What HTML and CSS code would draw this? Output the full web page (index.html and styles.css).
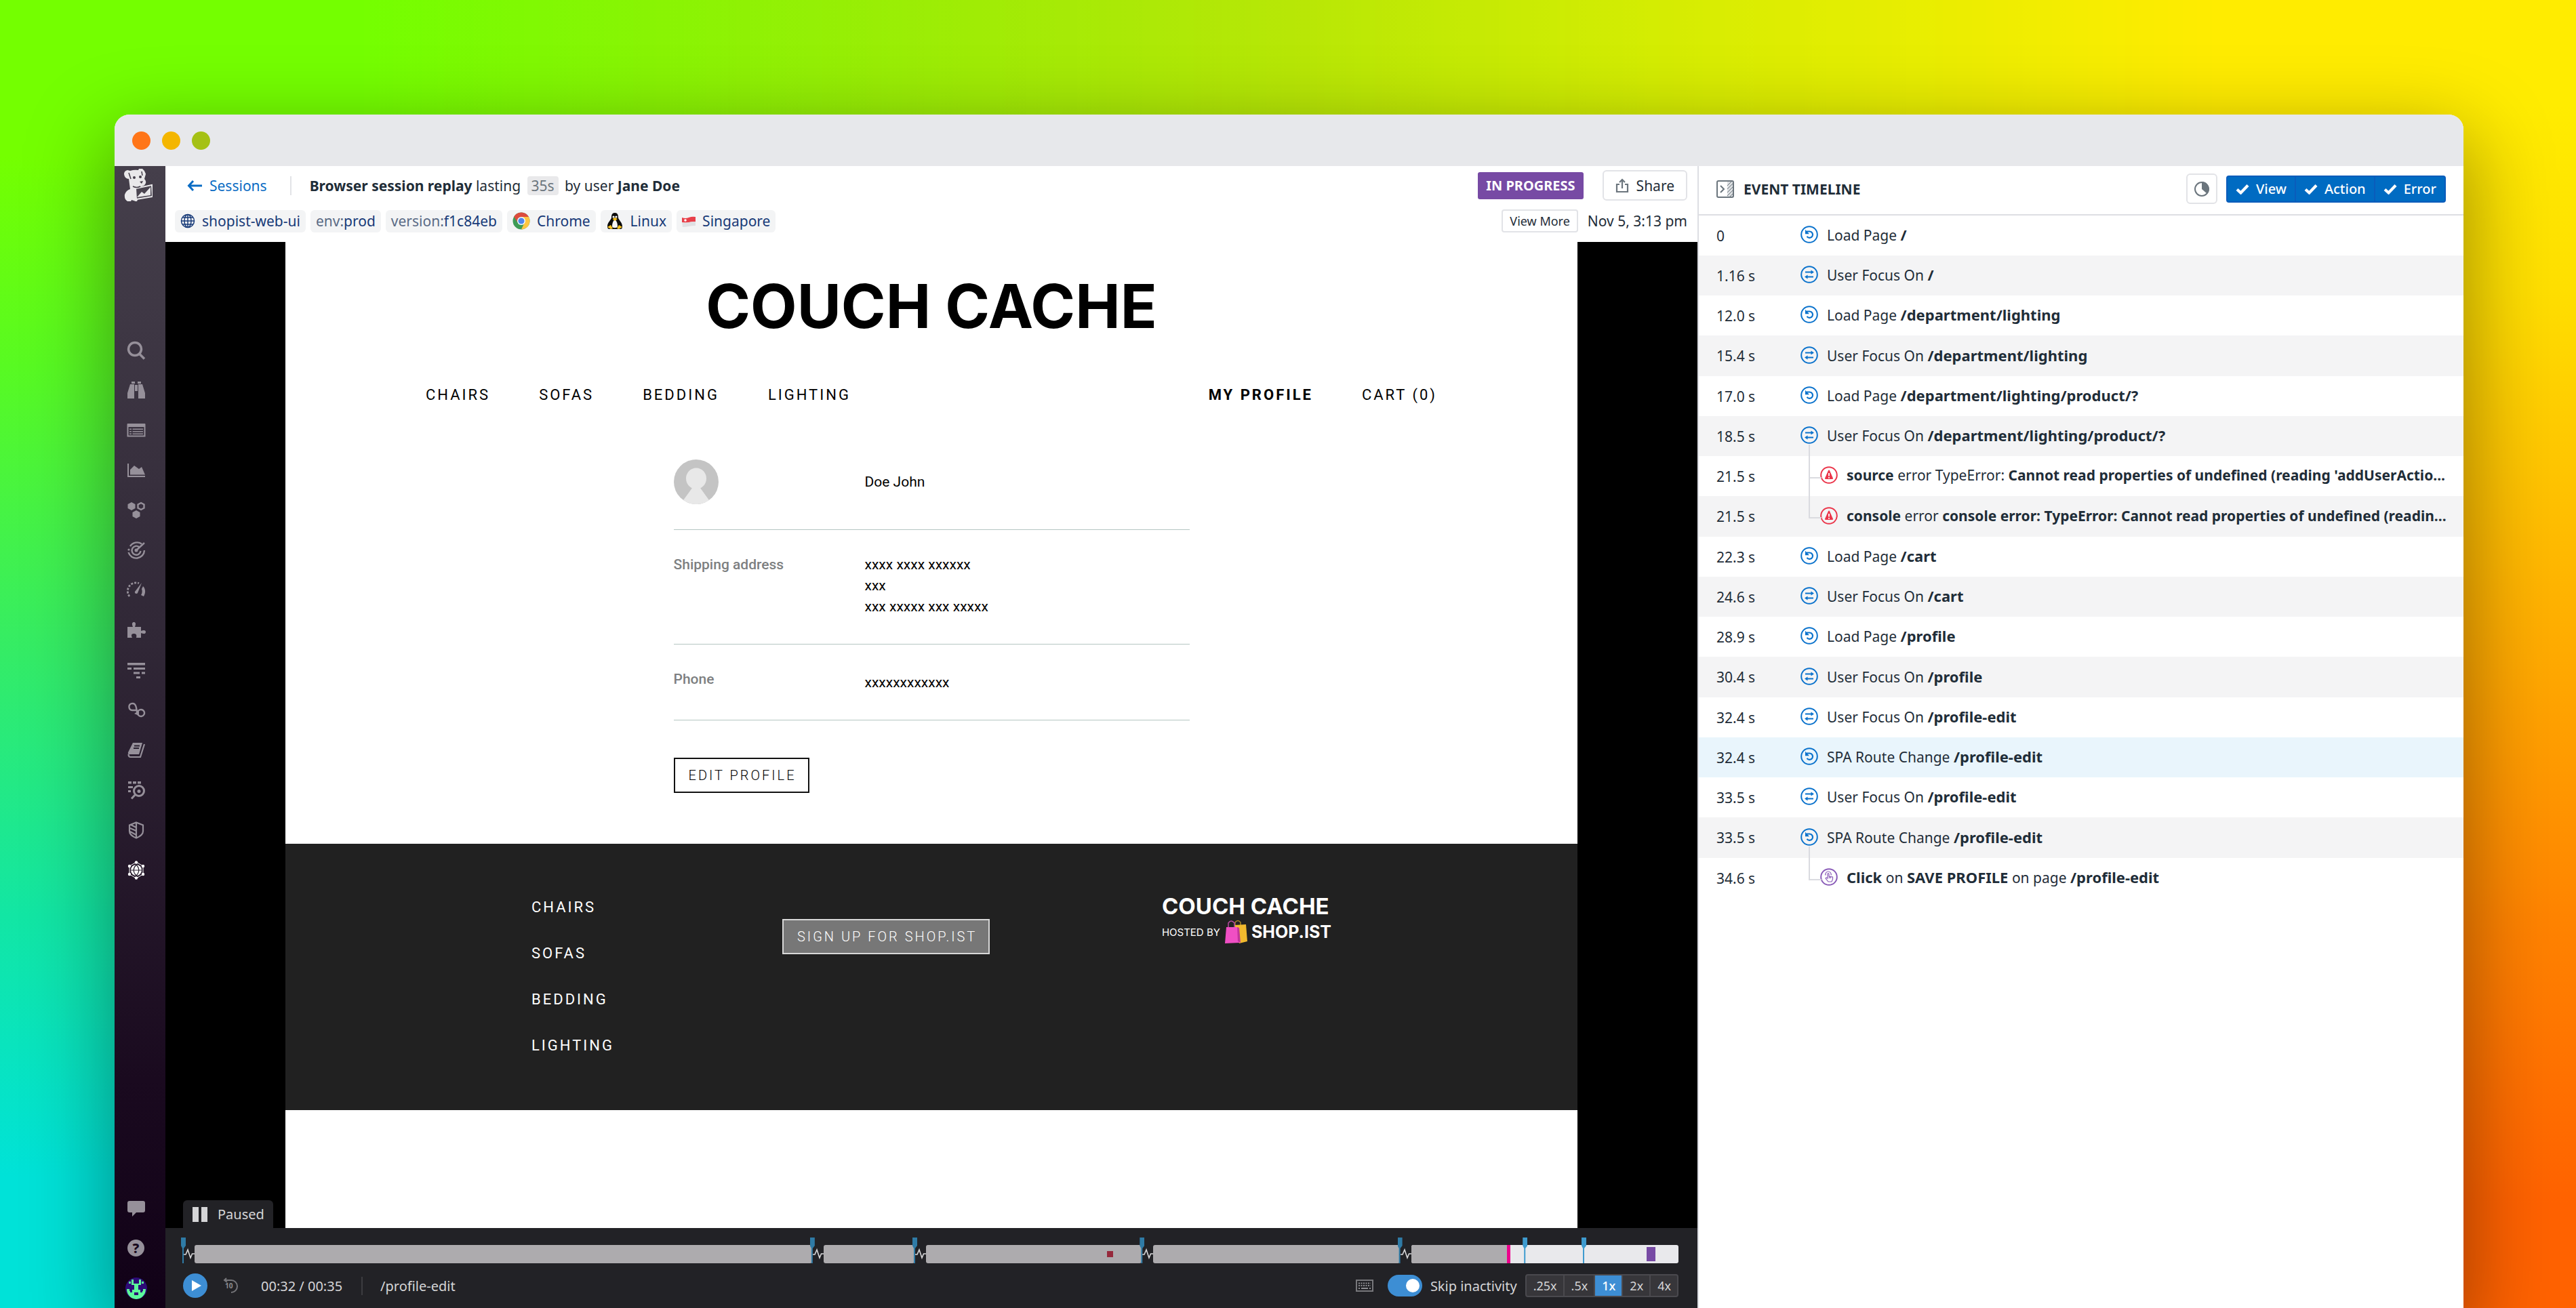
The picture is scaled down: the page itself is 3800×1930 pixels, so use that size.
FILE: index.html
```html
<!DOCTYPE html>
<html lang="en">
<head>
  <meta charset="UTF-8">
  <title>Session Replay</title>
  <link rel="stylesheet" href="styles.css">
</head>
<body>
  <svg class="sprite" aria-hidden="true">
    <symbol id="load" viewBox="0 0 26 26">
      <g fill="none" stroke="currentColor" stroke-width="2">
        <circle cx="13" cy="13" r="11.8"/>
        <path d="M9 8.5h4.5a4.7 4.7 0 1 1-4 7.4" stroke-width="2.2"/>
      </g>
      <path d="M7 5.8v6.4h6z" fill="currentColor"/>
    </symbol>
    <symbol id="focus" viewBox="0 0 26 26">
      <g fill="none" stroke="currentColor" stroke-width="2">
        <circle cx="13" cy="13" r="11.8"/>
        <path d="M7 9.5h10M19 16.5H9"/>
      </g>
      <path d="M15.5 6.5l4.5 3-4.5 3zM10.5 13.5l-4.5 3 4.5 3z" fill="currentColor"/>
    </symbol>
    <symbol id="error" viewBox="0 0 26 26">
      <circle cx="13" cy="13" r="11.8" fill="none" stroke="currentColor" stroke-width="2"/>
      <path d="M13 6.5l5 11.500H8z" fill="currentColor" stroke="currentColor" stroke-width="2" stroke-linejoin="round"/>
      <path d="M13 10v4.500M13 16v1.800" stroke="#fff" stroke-width="1.800"/>
    </symbol>
    <symbol id="click" viewBox="0 0 26 26">
      <circle cx="13" cy="13" r="11.8" fill="none" stroke="currentColor" stroke-width="2"/>
      <path d="M11 15V8.500a1 1 0 0 1 2 0V12l5.500 1v3.500l-1.500 3.500h-5l-4-5 1-1zM13.500 12v3M15.500 12.500V15M8 10.500a4.200 4.200 0 1 1 8 0" fill="none" stroke="currentColor" stroke-width="1.200"/>
    </symbol>
    <symbol id="check" viewBox="0 0 20 16">
      <path d="M2 8.500l5.500 5L18 2.500" fill="none" stroke="currentColor" stroke-width="4.200"/>
    </symbol>
    <symbol id="pulse" viewBox="0 0 17 27">
      <path d="M1 14h3l3-7 4 12 2.500-6H17" fill="none" stroke="#d8d8da" stroke-width="1.600"/>
    </symbol>
  </svg>

  <div class="window">
    <div class="titlebar">
      <span class="dot red"></span>
      <span class="dot yellow"></span>
      <span class="dot green"></span>
    </div>

    <div class="app">
      <aside class="sidebar">
        <a class="logo" href="#" aria-label="Home">
          <svg viewBox="0 0 44 48" width="44" height="48">
            <path d="M2 8q0-5 5-6l4 1q6-2 12-1l1-2h5q4 3 5 8l-2 7q3 3 2 6-1 4-6 5l-5 1-1 9 3 3-4 9h-3q2 0-5-2-1 4-6 2-5-3-4-10 2-6 8-8l-2-15q-6 0-7-7z" fill="#e9e8ea"/>
            <path d="M19 29l24-5 1 17-24 4z" fill="#4a4450" stroke="#e9e8ea" stroke-width="2"/>
            <path d="M21 42l7-8 4 3 9-10v12z" fill="#e9e8ea"/>
            <circle cx="17" cy="13" r="2" fill="#433d49"/>
            <circle cx="26" cy="12" r="2" fill="#433d49"/>
            <path d="M25 19l5-1-2 4z" fill="#433d49"/>
            <path d="M9 6l3 9M28 4l1 6M15 26q6 3 11 0" fill="none" stroke="#433d49" stroke-width="1.500"/>
          </svg>
        </a>
        <nav class="side-nav">
          <a href="#" aria-label="Search"><svg viewBox="0 0 28 28"><g fill="none" stroke="currentColor" stroke-width="3.500"><circle cx="12" cy="12" r="9.500"/><path d="M18.500 19l7.500 7.500"/></g></svg></a>
          <a href="#" aria-label="Watchdog"><svg viewBox="0 0 28 28"><path d="M7 1h5v3H7zM16 1h5v3h-5zM5 5h6v21H1V18zM17 5h6l4 13v8H17zM12 6h4v9h-4z" fill="currentColor"/></svg></a>
          <a href="#" aria-label="Logs"><svg viewBox="0 0 28 28"><path d="M1.500 5.500h25v17h-25z" fill="none" stroke="currentColor" stroke-width="2"/><path d="M1 4h26v5H1zM4 11.500h3v1.600H4zM8.500 11.500H24v1.600H8.500zM4 15h3v1.600H4zM8.500 15H24v1.600H8.500zM4 18.500h3v1.600H4zM8.500 18.500H24v1.600H8.500z" fill="currentColor"/></svg></a>
          <a href="#" aria-label="Metrics"><svg viewBox="0 0 28 28"><path d="M1 4h2v18h24v2H1zM5 20.500V13l6-6 7 5 4-3 5 11.500z" fill="currentColor"/></svg></a>
          <a href="#" aria-label="Infrastructure"><svg viewBox="0 0 28 28"><path d="M7 2l5.500 3v6L7 14l-5.500-3V5zM14 14l5.500 3v6L14 26l-5.500-3v-6z" fill="currentColor"/><path d="M21 3l4.500 2.500v5L21 13l-4.500-2.500v-5z" fill="none" stroke="currentColor" stroke-width="2.400"/></svg></a>
          <a href="#" aria-label="Synthetics"><svg viewBox="0 0 28 28"><g fill="none" stroke="currentColor" stroke-width="2.400"><path d="M22 4.500A12 12 0 0 0 5 8M2.500 17A12 12 0 0 0 26 14"/><path d="M18 9a6.500 6.500 0 1 0 2.500 6M13.500 14.500L26 3"/></g><circle cx="3" cy="13" r="1.600" fill="currentColor"/><circle cx="14" cy="14" r="2.500" fill="currentColor"/></svg></a>
          <a href="#" aria-label="Performance"><svg viewBox="0 0 28 28"><path d="M4 23A12.500 12.500 0 0 1 18 3.500" fill="none" stroke="currentColor" stroke-width="2.800" stroke-dasharray="3 2"/><path d="M24 8c4 4 4 10 1 15l-4-2c2-3 2-6 1-9z" fill="currentColor"/><path d="M22 3l-6 15c-1 2-5 1-4-2z" fill="currentColor"/></svg></a>
          <a href="#" aria-label="Integrations"><svg viewBox="0 0 28 28"><path d="M1 9h8c-2-5-1-7 1.500-7S14 4 12 9h9v6c5-2 7-1 7 1.500S26 20 21 18v7h-7c1-4 0-6-3.500-6S6 21 8 25H1z" fill="currentColor"/></svg></a>
          <a href="#" aria-label="Traces"><svg viewBox="0 0 28 28"><path d="M1 3h26v3.500H1zM1 10h6v3H1zM10 10h17v3H10zM10 16.500h9v3h-9zM22 16.500h5v3h-5zM14 23h6v3h-6z" fill="currentColor"/></svg></a>
          <a href="#" aria-label="CI"><svg viewBox="0 0 28 28"><g fill="none" stroke="currentColor" stroke-width="2.400"><path d="M14 14H8a5 5 0 1 1 5-7c2 4 1 10 4 14a5 5 0 1 0 4-8q-4 0-7 6"/></g><path d="M11 19l7 3v-7z" fill="currentColor"/></svg></a>
          <a href="#" aria-label="Notebooks"><svg viewBox="0 0 28 28"><path d="M9 3h14l-5 17H4c-3 0-2-2-2-3z" fill="currentColor"/><path d="M2.500 20c0 3 1 4 3 4H20l6-19" fill="none" stroke="currentColor" stroke-width="2.200"/><path d="M11 7.500h8M10 11h8" stroke="#2b2231" stroke-width="1.800"/></svg></a>
          <a href="#" aria-label="Log search"><svg viewBox="0 0 28 28"><path d="M2 1h5v3.500H2zM9 1h5v3.500H9zM16 1h5v3.500h-5zM2 8h7v3H2zM2 14h4v3H2z" fill="currentColor"/><g fill="none" stroke="currentColor" stroke-width="3"><circle cx="18" cy="15" r="7.500"/><path d="M12.500 20.500L7 26.500"/></g><circle cx="18" cy="15.500" r="2.500" fill="currentColor"/></svg></a>
          <a href="#" aria-label="Security"><svg viewBox="0 0 28 28"><path d="M14 2.500l10 4v9c0 5-5 8-10 10-5-2-10-5-10-10v-9zM14 2.500V25M5 11l9 4M5 16l9 5M6 6l8 4" fill="none" stroke="currentColor" stroke-width="2.200"/></svg></a>
          <a class="active" href="#" aria-label="UX Monitoring"><svg viewBox="0 0 28 28"><circle cx="14" cy="14" r="8" fill="currentColor"/><path d="M6 14h16M14 6c-5 5-5 11 0 16M14 6c5 5 5 11 0 16" fill="none" stroke="#241b2a" stroke-width="1.200"/><path d="M14 2l10 6v12l-10 6-10-6V8z" fill="none" stroke="currentColor"/><g fill="currentColor"><circle cx="14" cy="2.500" r="2.200"/><circle cx="14" cy="25.500" r="2.200"/><circle cx="4" cy="8" r="2.200"/><circle cx="24" cy="8" r="2.200"/><circle cx="4" cy="20" r="2.200"/><circle cx="24" cy="20" r="2.200"/></g></svg></a>
        </nav>
        <nav class="side-nav side-bottom">
          <a href="#" aria-label="Chat"><svg viewBox="0 0 28 28"><path d="M4 3h20q3 0 3 3v11q0 3-3 3h-10l-6 6v-6H4q-3 0-3-3V6q0-3 3-3z" fill="currentColor"/></svg></a>
          <a class="help" href="#" aria-label="Help"><span>?</span></a>
          <a href="#" aria-label="Account"><svg class="avatar" viewBox="0 0 32 32"><circle cx="16" cy="16" r="16" fill="#2d0b78"/><path d="M5 6h3v3H5zM24 6h3v3h-3zM9 3h3v6h8V3h3v8h-4v7h4v5h3v-6h4a14 15 0 0 1-28 0h4v6h3v-5h4v-7H9z" fill="#5cfb9b"/><path d="M3 20h26a14 13 0 0 1-26 0z" fill="#5cfb9b"/><path d="M13 22h6v4h-6zM7 16h3v6H7zM22 16h3v6h-3z" fill="#2d0b78"/></svg></a>
        </nav>
      </aside>

      <main class="main">
        <header class="topbar">
          <div class="topbar-row">
            <a class="back" href="#">
              <svg viewBox="0 0 22 18" width="22" height="18"><path d="M9 2L2.500 9 9 16M3 9h19" fill="none" stroke="currentColor" stroke-width="3"/></svg>
              Sessions
            </a>
            <p class="session-title"><b>Browser session replay</b> lasting <span class="duration">35s</span> by user <b>Jane Doe</b></p>
            <span class="status">IN PROGRESS</span>
            <button class="share" type="button">
              <svg viewBox="0 0 20 22" width="20" height="22"><path d="M6 9H2v11h16V9h-4M10 15V3M6 6l4-4 4 4" fill="none" stroke="#6b757d" stroke-width="2.200"/></svg>
              Share
            </button>
          </div>
          <div class="topbar-row tags-row">
            <span class="tag">
              <svg viewBox="0 0 22 22" width="22" height="22"><g fill="none" stroke="#173a78" stroke-width="1.500"><circle cx="11" cy="11" r="9.500"/><path d="M1.500 11h19M3.500 6h15M3.500 16h15M11 1.500v19"/><ellipse cx="11" cy="11" rx="5" ry="9.500"/></g></svg>
              shopist-web-ui
            </span>
            <span class="tag"><i>env:</i>prod</span>
            <span class="tag"><i>version:</i>f1c84eb</span>
            <span class="tag">
              <svg viewBox="0 0 26 26" width="26" height="26"><circle cx="13" cy="13" r="12.500" fill="#3e9b56"/><path d="M24 7a12.500 12.500 0 0 1-11 18.500L18.500 14 13 7z" fill="#fcc642"/><path d="M2.200 6.700A12.500 12.500 0 0 1 24 7H13a6 6 0 0 0-5.500 8z" fill="#dc4b3e"/><circle cx="13" cy="13" r="6" fill="#fff"/><circle cx="13" cy="13" r="4.600" fill="#4f87ec"/></svg>
              Chrome
            </span>
            <span class="tag">
              <svg viewBox="0 0 26 26" width="26" height="26"><path d="M13 1c4 0 5 3 5 7 0 3 6 7 6 13 0 3-1 4-3 4H5c-2 0-3-1-3-4 0-6 6-10 6-13 0-4 1-7 5-7z" fill="#0b0b0b"/><path d="M13 11c3 2 4 6 4 10 0 3-8 3-8 0 0-4 1-8 4-10z" fill="#f5f5f5"/><circle cx="11" cy="7" r="1.600" fill="#fff"/><circle cx="15" cy="7" r="1.600" fill="#fff"/><path d="M9.500 10l3.500-2 4 2-4 3zM2 22l5-3 3 5-3 1zM24 22l-5-3-3 5 3 1z" fill="#f9c31f"/></svg>
              Linux
            </span>
            <span class="tag">
              <svg viewBox="0 0 20 20" width="20" height="20"><path d="M0 5q5 2 10 0t10-1v7q-5 0-10 1t-10 0z" fill="#e8404a"/><path d="M0 12q5 1 10 0t10-1v6q-5 0-10 1t-9 1z" fill="#e0e0e3"/><circle cx="5" cy="9" r="1.800" fill="#fff"/></svg>
              Singapore
            </span>
            <button class="view-more" type="button">View More</button>
            <time class="date">Nov 5, 3:13 pm</time>
          </div>
        </header>

        <section class="stage">
          <div class="site">
            <h1 class="site-title">COUCH CACHE</h1>
            <nav class="site-nav">
              <a href="#">CHAIRS</a>
              <a href="#">SOFAS</a>
              <a href="#">BEDDING</a>
              <a href="#">LIGHTING</a>
              <a class="current" href="#">MY PROFILE</a>
              <a href="#">CART (0)</a>
            </nav>

            <div class="profile">
              <div class="profile-row person">
                <svg viewBox="0 0 66 66" width="66" height="66"><circle cx="33" cy="33" r="33" fill="#c4c4c4"/><ellipse cx="33" cy="28" rx="15" ry="15.500" fill="#e8e8e8"/><path d="M27 38v4L14 60a33 33 0 0 0 38 0L39 42v-4z" fill="#e8e8e8"/></svg>
                <span>Doe John</span>
              </div>
              <div class="profile-row">
                <span class="label">Shipping address</span>
                <span>xxxx xxxx xxxxxx<br>xxx<br>xxx xxxxx xxx xxxxx</span>
              </div>
              <div class="profile-row">
                <span class="label">Phone</span>
                <span class="phone">xxxxxxxxxxxx</span>
              </div>
              <button class="site-button" type="button">EDIT PROFILE</button>
            </div>

            <footer class="site-footer">
              <div class="footer-inner">
                <nav class="footer-nav">
                  <a href="#">CHAIRS</a>
                  <a href="#">SOFAS</a>
                  <a href="#">BEDDING</a>
                  <a href="#">LIGHTING</a>
                </nav>
                <button class="site-button signup" type="button">SIGN UP FOR SHOP.IST</button>
                <div class="brand">
                  <p class="brand-name">COUCH CACHE</p>
                  <p class="hosted">
                    <span>HOSTED BY</span>
                    <svg viewBox="0 0 34 36" width="34" height="36"><path d="M16 8V4q4-5 8 0v5" fill="none" stroke="#a8842a" stroke-width="1.500"/><path d="M15 8l17-1 2 25-12 3z" fill="#f0b92e"/><path d="M6 14V5q4-6 9 0v9" fill="none" stroke="#b54aa0" stroke-width="1.500"/><path d="M3 11h16l4 23-22 1z" fill="#f04fc4"/><path d="M19 11l3 1 2 22-4-2z" fill="#c2359b"/></svg>
                    <b>SHOP.IST</b>
                  </p>
                </div>
              </div>
            </footer>
          </div>
          <div class="paused">
            <svg viewBox="0 0 22 22" width="22" height="22"><path d="M0 0h9v22H0zM13 0h9v22h-9z" fill="#d5d5d7"/></svg>
            Paused
          </div>
        </section>

        <section class="player">
          <div class="track">
            <span class="idle"><svg><use href="#pulse"/></svg></span>
            <span class="segment" style="flex-grow: 910"></span>
            <span class="idle"><svg><use href="#pulse"/></svg></span>
            <span class="segment" style="flex-grow: 134"></span>
            <span class="idle"><svg><use href="#pulse"/></svg></span>
            <span class="segment" style="flex-grow: 318"><span class="mark mark-error" style="left: 84%"></span></span>
            <span class="idle"><svg><use href="#pulse"/></svg></span>
            <span class="segment" style="flex-grow: 363"></span>
            <span class="idle"><svg><use href="#pulse"/></svg></span>
            <span class="segment ahead" style="flex-grow: 394">
              <span class="played" style="width: 37%"></span>
              <span class="pin" style="left: 42.5%"></span>
              <span class="pin" style="left: 64.5%"></span>
              <span class="mark mark-click" style="left: 88%"></span>
            </span>
          </div>
          <div class="controls">
            <button class="play" type="button" aria-label="Play"><svg viewBox="0 0 36 36" width="36" height="36"><path d="M13 10l14 8-14 8z" fill="#fff"/></svg></button>
            <button class="rewind" type="button" aria-label="Back 10 seconds"><svg viewBox="0 0 22 24" width="22" height="24"><path d="M3 4h9a8 8 0 0 1 0 18M5 1L2 4l4 3" fill="none" stroke="#77777b" stroke-width="2"/><text x="3" y="16" font-size="10" font-weight="700" fill="#8d8d91">10</text></svg></button>
            <span class="clock">00:32 / 00:35</span>
            <span class="path">/profile-edit</span>
            <button class="keyboard" type="button" aria-label="Keyboard shortcuts"><svg viewBox="0 0 26 18" width="26" height="18"><path d="M1 1h24v16H1z" fill="none" stroke="#77777b" stroke-width="2"/><path d="M4 5.500h18M4 9h18" stroke="#8d8d91" stroke-width="2" stroke-dasharray="2 1.500"/><path d="M4 13h2M8 13h10M20 13h2" stroke="#8d8d91" stroke-width="2"/></svg></button>
            <label class="skip"><input class="switch" type="checkbox" checked>Skip inactivity</label>
            <div class="speeds">
              <label><input type="radio" name="speed">.25x</label>
              <label><input type="radio" name="speed">.5x</label>
              <label><input type="radio" name="speed" checked>1x</label>
              <label><input type="radio" name="speed">2x</label>
              <label><input type="radio" name="speed">4x</label>
            </div>
          </div>
        </section>
      </main>

      <aside class="timeline">
        <header class="timeline-head">
          <svg viewBox="0 0 26 26" width="26" height="26"><path d="M16 2h8v22h-8z" fill="#dcdfe2"/><path d="M16 8l6-6M16 13l8-8M16 18l8-8M16 23l8-8M20 24l4-4" stroke="#6b757d"/><rect x="1" y="1" width="24" height="24" rx="2" fill="none" stroke="#6b757d" stroke-width="2"/><path d="M6 8l5 5-5 5" fill="none" stroke="#6b757d" stroke-width="2"/></svg>
          <h2>EVENT TIMELINE</h2>
          <button class="pie" type="button" aria-label="Duration"><svg viewBox="0 0 24 24" width="24" height="24"><circle cx="12" cy="12" r="10" fill="none" stroke="#6b757d" stroke-width="2"/><path d="M12 1a11 11 0 0 1 8 18l-8-7z" fill="#6b757d"/></svg></button>
          <div class="filters">
            <label><input type="checkbox" checked><svg width="20" height="16"><use href="#check"/></svg>View</label>
            <label><input type="checkbox" checked><svg width="20" height="16"><use href="#check"/></svg>Action</label>
            <label><input type="checkbox" checked><svg width="20" height="16"><use href="#check"/></svg>Error</label>
          </div>
        </header>
        <ol class="events">
          <li><time>0</time><svg><use href="#load"/></svg><p>Load Page <b>/</b></p></li>
          <li><time>1.16 s</time><svg><use href="#focus"/></svg><p>User Focus On <b>/</b></p></li>
          <li><time>12.0 s</time><svg><use href="#load"/></svg><p>Load Page <b>/department/lighting</b></p></li>
          <li><time>15.4 s</time><svg><use href="#focus"/></svg><p>User Focus On <b>/department/lighting</b></p></li>
          <li><time>17.0 s</time><svg><use href="#load"/></svg><p>Load Page <b>/department/lighting/product/?</b></p></li>
          <li><time>18.5 s</time><svg><use href="#focus"/></svg><p>User Focus On <b>/department/lighting/product/?</b></p></li>
          <li class="nested error"><time>21.5 s</time><svg><use href="#error"/></svg><p><b>source</b> error TypeError: <b>Cannot read properties of undefined (reading 'addUserActio...</b></p></li>
          <li class="nested error"><time>21.5 s</time><svg><use href="#error"/></svg><p><b>console</b> error <b>console error: TypeError: Cannot read properties of undefined (readin...</b></p></li>
          <li><time>22.3 s</time><svg><use href="#load"/></svg><p>Load Page <b>/cart</b></p></li>
          <li><time>24.6 s</time><svg><use href="#focus"/></svg><p>User Focus On <b>/cart</b></p></li>
          <li><time>28.9 s</time><svg><use href="#load"/></svg><p>Load Page <b>/profile</b></p></li>
          <li><time>30.4 s</time><svg><use href="#focus"/></svg><p>User Focus On <b>/profile</b></p></li>
          <li><time>32.4 s</time><svg><use href="#focus"/></svg><p>User Focus On <b>/profile-edit</b></p></li>
          <li class="selected"><time>32.4 s</time><svg><use href="#load"/></svg><p>SPA Route Change <b>/profile-edit</b></p></li>
          <li><time>33.5 s</time><svg><use href="#focus"/></svg><p>User Focus On <b>/profile-edit</b></p></li>
          <li><time>33.5 s</time><svg><use href="#load"/></svg><p>SPA Route Change <b>/profile-edit</b></p></li>
          <li class="nested click"><time>34.6 s</time><svg><use href="#click"/></svg><p><b>Click</b> on <b>SAVE PROFILE</b> on page <b>/profile-edit</b></p></li>
        </ol>
      </aside>
    </div>
  </div>
</body>
</html>
```
FILE: styles.css
```css
* {
  box-sizing: border-box;
}

body {
  margin: 0;
  height: 100vh;
  padding: 169px 166px 0 169px;
  overflow: hidden;
  position: relative;
  z-index: 0;
  font-family: "Noto Sans", sans-serif;
  font-size: 21px;
  color: #1f2d38;
  background: linear-gradient(to bottom, #ffec00 8%, #ffdf00 22%, #ffb400 45%, #ff8400 70%, #ff6200 92%);
}

/* green to cyan side, faded out towards the right */
body::before {
  content: "";
  position: absolute;
  inset: 0;
  z-index: -1;
  background:
    linear-gradient(to right, transparent 14%, rgba(90, 110, 60, 0.2) 50%, transparent 84%),
    linear-gradient(to bottom, #74ff00 12%, #58fa22 28%, #34ec66 50%, #12e6a4 70%, #00e2d8 90%);
  -webkit-mask-image: linear-gradient(to right, #000 14%, transparent 86%);
  mask-image: linear-gradient(to right, #000 14%, transparent 86%);
}

h1, h2, p, ol {
  margin: 0;
  padding: 0;
}

a {
  color: inherit;
  text-decoration: none;
}

b {
  font-weight: 700;
}

button {
  font: inherit;
  color: inherit;
  padding: 0;
  border: none;
  background: none;
}

svg {
  display: block;
  flex: none;
}

.sprite {
  position: absolute;
  width: 0;
  height: 0;
}

.window {
  height: 100%;
  display: flex;
  flex-direction: column;
  border-radius: 22px 22px 0 0;
  box-shadow: 0 40px 120px 10px rgba(0, 0, 0, 0.36);
  overflow: hidden;
  background: #fff;
}

.titlebar {
  flex: none;
  height: 76px;
  display: flex;
  align-items: center;
  gap: 17px;
  padding-left: 26px;
  background: #e7e8eb;
}

.dot {
  width: 27px;
  height: 27px;
  border-radius: 50%;
}

.red { background: #ff7518; }
.yellow { background: #f4b600; }
.green { background: #a5c115; }

.app {
  flex: 1;
  min-height: 0;
  display: grid;
  grid-template-columns: 75px minmax(0, 2fr) minmax(0, 1fr);
}

/* Sidebar */

.sidebar {
  display: flex;
  flex-direction: column;
  color: #96909a;
  background: linear-gradient(to bottom, #453f4b, #302736 42%, #1a0a1f 80%, #110117);
}

.logo {
  padding: 4px 12px;
  margin-bottom: 186px;
}

.side-nav a {
  display: flex;
  align-items: center;
  height: 59px;
  padding-left: 18px;
}

.side-nav svg {
  width: 28px;
  height: 28px;
}

.side-nav .active {
  color: #fff;
}

.side-bottom {
  margin-top: auto;
}

.side-bottom .avatar {
  width: 32px;
  height: 32px;
  margin-left: -2px;
}

.help span {
  width: 25px;
  height: 25px;
  margin-left: 1px;
  border-radius: 50%;
  background: #96909a;
  color: #17081c;
  font-size: 20px;
  font-weight: 800;
  line-height: 25px;
  text-align: center;
}

/* Session header */

.main {
  display: flex;
  flex-direction: column;
  min-width: 0;
}

.topbar {
  flex: none;
  height: 112px;
}

.topbar-row {
  display: flex;
  align-items: center;
  height: 57px;
  padding: 0 15px 0 32px;
}

.back {
  display: flex;
  align-items: center;
  gap: 11px;
  color: #0a6cc4;
}

.session-title {
  margin-left: 34px;
  padding-left: 27px;
  border-left: 2px solid #e2e3e7;
  line-height: 28px;
}

.duration {
  display: inline-block;
  margin: 0 4px;
  padding: 0 6px;
  border-radius: 4px;
  background: #e9e9eb;
  color: #6b757d;
}

.status {
  margin-left: auto;
  padding: 0 12px;
  border-radius: 3px;
  background: #774aa4;
  color: #fff;
  font-size: 20px;
  font-weight: 700;
  line-height: 40px;
}

.share {
  display: flex;
  align-items: center;
  gap: 11px;
  height: 45px;
  margin-left: 28px;
  padding: 0 17px;
  border: 2px solid #e2e3e7;
  border-radius: 6px;
}

.tags-row {
  height: 48px;
  gap: 7px;
  padding-left: 14px;
}

.tag {
  display: flex;
  align-items: center;
  gap: 10px;
  height: 33px;
  padding: 0 8px;
  border-radius: 6px;
  background: #f3f4f5;
  color: #173a78;
}

.tag i {
  margin-right: -10px;
  font-style: normal;
  color: #5a6b85;
}

.view-more {
  margin-left: auto;
  height: 34px;
  padding: 0 10px;
  border: 2px solid #e2e3e7;
  border-radius: 4px;
  font-size: 18px;
}

.date {
  margin-left: 7px;
}

/* Replayed page */

.stage {
  flex: 1;
  min-height: 0;
  position: relative;
  padding: 0 177px;
  background: #000;
}

.site {
  height: 100%;
  padding-top: 45px;
  background: #fff;
  color: #000;
  font-family: Roboto, sans-serif;
}

.site-title {
  font-family: Inter, sans-serif;
  font-size: 89px;
  font-weight: 700;
  line-height: 100px;
  text-align: center;
}

.site-nav {
  display: flex;
  gap: 72px;
  width: 1492px;
  max-width: 100%;
  margin: 66px auto 0;
  font-size: 22px;
  line-height: 30px;
  letter-spacing: 3px;
}

.site-nav .current {
  margin-left: auto;
  font-weight: 700;
}

.profile {
  width: 761px;
  max-width: 100%;
  margin: 80px auto 0;
}

.profile-row {
  display: grid;
  grid-template-columns: 282px 1fr;
  padding: 36px 0 39px;
  border-bottom: 1px solid #b4c6c2;
  line-height: 31px;
}

.person {
  align-items: center;
  padding: 0 0 37px;
}

.label {
  color: #7d7f81;
  font-weight: 500;
}

.phone {
  padding-top: 5px;
}

.site-button {
  height: 52px;
  margin-top: 55px;
  padding: 0 17px 0 20px;
  border: 2px solid #111;
  font-size: 20px;
  font-weight: 300;
  letter-spacing: 3px;
}

.site-footer {
  height: 393px;
  margin-top: 75px;
  background: #212121;
  color: #fff;
}

.footer-inner {
  display: grid;
  grid-template-columns: 370px 1fr auto;
  align-items: start;
  width: 1180px;
  max-width: 100%;
  margin: 0 auto;
}

.footer-nav {
  padding-top: 60px;
  font-size: 22px;
  line-height: 68px;
  letter-spacing: 3px;
}

.footer-nav a {
  display: block;
}

.signup {
  justify-self: start;
  margin-top: 111px;
  border-color: #d8d8d8;
  background: #777;
}

.brand {
  padding-top: 72px;
  font-family: Inter, sans-serif;
}

.brand-name {
  font-size: 33px;
  font-weight: 700;
  line-height: 40px;
}

.hosted {
  display: flex;
  align-items: center;
  justify-content: flex-end;
  gap: 6px;
  font-size: 15px;
}

.hosted b {
  font-size: 25px;
}

.paused {
  position: absolute;
  left: 26px;
  bottom: 0;
  display: flex;
  align-items: center;
  gap: 15px;
  height: 41px;
  padding: 0 13px 0 14px;
  border-radius: 6px 6px 0 0;
  background: #222226;
  color: #d5d5d7;
  font-size: 20px;
}

/* Player */

.player {
  flex: none;
  height: 118px;
  padding: 25px 28px 0 26px;
  background: #222226;
  color: #d5d5d7;
  font-size: 20px;
}

.track {
  display: flex;
  height: 27px;
}

.idle {
  flex: none;
  position: relative;
  width: 17px;
}

.idle svg {
  width: 17px;
  height: 27px;
}

.segment {
  flex: 1 1 0;
  position: relative;
  border-radius: 3px;
  background: #adabae;
}

.ahead {
  background: #e9e9ec;
}

.played {
  display: block;
  height: 27px;
  border-right: 5px solid #ec008c;
  border-radius: 3px 0 0 3px;
  background: #adabae;
}

.pin,
.idle::before {
  content: "";
  position: absolute;
  top: -11px;
  left: 0;
  width: 7px;
  height: 38px;
  margin-left: -3px;
  background: #2f7ba6;
  clip-path: polygon(0 0, 100% 0, 100% 12px, 4px 16px, 4px 100%, 2px 100%, 2px 16px, 0 12px);
}

.pin {
  background: #3e9bcf;
}

.mark {
  position: absolute;
  top: 3px;
  width: 13px;
  height: 21px;
  background: #774aa4;
}

.mark-error {
  top: 9px;
  width: 9px;
  height: 9px;
  background: #96293c;
}

.controls {
  display: flex;
  align-items: center;
  height: 66px;
}

.play {
  border-radius: 50%;
  background: #3d8ed4;
}

.rewind {
  margin: 0 34px 0 23px;
}

.clock {
  padding-right: 28px;
  border-right: 2px solid #3c3c40;
}

.path {
  padding-left: 26px;
}

.keyboard {
  margin-left: auto;
}

.skip {
  display: flex;
  align-items: center;
  gap: 12px;
  margin: 0 12px 0 21px;
}

.switch {
  appearance: none;
  width: 51px;
  height: 32px;
  margin: 0;
  padding: 6px 4px;
  border-radius: 16px;
  background: #3d8ed4;
}

.switch::before {
  content: "";
  display: block;
  width: 20px;
  height: 20px;
  margin-left: auto;
  border-radius: 50%;
  background: #fff;
}

.speeds {
  display: flex;
  border: 2px solid #4a494e;
  border-radius: 4px;
  background: #37363a;
  font-size: 18px;
  line-height: 30px;
}

.speeds label {
  padding: 0 9px 0 10px;
}

.speeds label + label {
  border-left: 2px solid #4a494e;
}

.speeds label:has(:checked) {
  background: #3d8ed4;
  color: #fff;
  font-weight: 500;
}

.speeds input,
.filters input {
  position: absolute;
  opacity: 0;
}

/* Event timeline */

.timeline {
  border-left: 2px solid #dddee3;
  background: #fff;
}

.timeline-head {
  display: flex;
  align-items: center;
  height: 73px;
  padding: 0 26px 4px;
  border-bottom: 2px solid #dddee3;
}

.timeline-head h2 {
  margin-left: 14px;
  font-size: 21px;
  font-weight: 700;
}

.pie {
  display: flex;
  align-items: center;
  justify-content: center;
  width: 46px;
  height: 45px;
  margin-left: auto;
  border: 2px solid #e2e3e7;
  border-radius: 6px;
}

.filters {
  display: flex;
  margin-left: 13px;
  border: 2px solid #0a5cbb;
  border-radius: 4px;
  background: #006bc2;
  color: #fff;
  font-size: 20px;
  font-weight: 500;
  line-height: 36px;
}

.filters label {
  display: flex;
  align-items: center;
  gap: 10px;
  padding: 0 12px;
}

.filters label + label {
  border-left: 2px solid #0a5cbb;
}

.events {
  list-style: none;
}

.events li {
  position: relative;
  display: grid;
  grid-template-columns: 111px 26px minmax(0, 1fr);
  align-items: center;
  gap: 13px;
  height: 59px;
  padding: 0 3px 3px 26px;
}

.events li:nth-child(4n) {
  height: 60px;
}

.events li:nth-child(even) {
  background: #f4f4f5;
}

.events li.selected {
  background: #e9f5fc;
}

.events time {
  padding-top: 3px;
}

.events svg {
  width: 26px;
  height: 26px;
  color: #0a72cc;
}

.events p {
  overflow: hidden;
  text-overflow: ellipsis;
  white-space: nowrap;
}

.events b {
  font-size: 22px;
}

.events .error b {
  font-size: 21px;
}

.events .nested {
  grid-template-columns: 140px 26px minmax(0, 1fr);
}

/* branch from the parent event to this one */
.nested::before {
  content: "";
  position: absolute;
  left: 162px;
  top: -17px;
  width: 17px;
  height: 48px;
  border: solid #dadbe0;
  border-width: 0 0 2px 2px;
}

.nested + .nested::before {
  top: -29px;
  height: 60px;
}

.events .error svg { color: #eb364b; }
.events .click svg { color: #8a5cb8; }
```
